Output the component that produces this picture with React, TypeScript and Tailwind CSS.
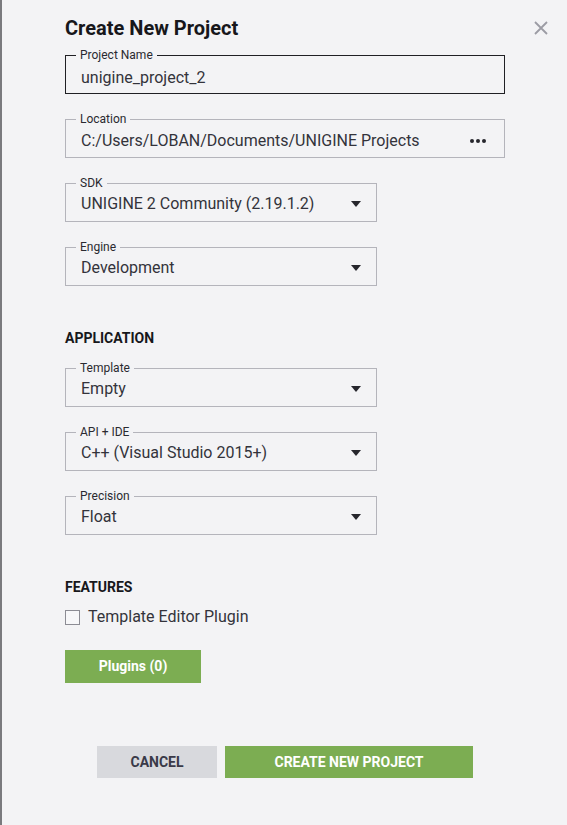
import React from "react";

function Caret() {
  return (
    <svg width="10" height="6" viewBox="0 0 10 6" className="shrink-0">
      <path d="M0 0h10L5 6z" fill="#26262c" />
    </svg>
  );
}

function Field({
  label,
  value,
  active,
  wide,
  right,
  pad = "pb-[4px]",
}: {
  label: string;
  value: string;
  active?: boolean;
  wide?: boolean;
  right?: React.ReactNode;
  pad?: string;
}) {
  return (
    <fieldset
      className={`${wide ? "w-[440px]" : "w-[312px]"} ${
        active ? "border-[1.5px] border-[#202024]" : "border border-[#b4b4bb]"
      } px-[15px] pb-0 pt-0 m-0 min-w-0`}
    >
      <legend className="ml-[-5px] px-[4px] text-[12px] leading-[14px] text-[#2a2a30]">{label}</legend>
      <div className={`flex h-[31px] items-center justify-between ${pad}`}>
        <span className="text-[16px] text-[#33333b]">{value}</span>
        {right}
      </div>
    </fieldset>
  );
}

export default function App() {
  return (
    <div
      className="min-h-[825px] w-[567px] bg-[#f3f3f5] border-l-2 border-[#7a7a7e] relative"
      style={{ fontFamily: "Roboto, 'Liberation Sans', sans-serif" }}
    >
      {/* Close */}
      <button className="absolute right-[19px] top-[21px] text-[#9c9ca4]">
        <svg width="14" height="14" viewBox="0 0 14 14">
          <path d="M1 1l12 12M13 1L1 13" stroke="currentColor" strokeWidth="1.8" />
        </svg>
      </button>

      <div className="pl-[63px] pt-[15px]">
        <h1 className="text-[20px] font-bold leading-[26px] text-[#17171b]">Create New Project</h1>

        <div className="mt-[7px] flex flex-col gap-[18px]">
          <Field label="Project Name" value="unigine_project_2" active wide pad="pb-[0px]" />
          <Field
            label="Location"
            value="C:/Users/LOBAN/Documents/UNIGINE Projects"
            wide
            pad="pb-[2px]"
            right={
              <span className="flex gap-[2px] pr-[3px]">
                <span className="h-[4px] w-[4px] rounded-full bg-[#26262c]" />
                <span className="h-[4px] w-[4px] rounded-full bg-[#26262c]" />
                <span className="h-[4px] w-[4px] rounded-full bg-[#26262c]" />
              </span>
            }
          />
          <Field label="SDK" value="UNIGINE 2 Community (2.19.1.2)" right={<Caret />} />
          <Field label="Engine" value="Development" right={<Caret />} />
        </div>

        <h2 className="mt-[43px] text-[14px] font-bold leading-[18px] text-[#17171b]">APPLICATION</h2>

        <div className="mt-[14px] flex flex-col gap-[18px]">
          <Field label="Template" value="Empty" right={<Caret />} />
          <Field label="API + IDE" value="C++ (Visual Studio 2015+)" right={<Caret />} />
          <Field label="Precision" value="Float" right={<Caret />} />
        </div>

        <h2 className="mt-[43px] text-[14px] font-bold leading-[18px] text-[#17171b]">FEATURES</h2>

        <label className="mt-[9px] flex items-center gap-[8px]">
          <span className="h-[15px] w-[15px] border border-[#8c8c94] bg-[#f7f7f9]" />
          <span className="text-[16px] text-[#33333b]">Template Editor Plugin</span>
        </label>

        <button className="mt-[21px] h-[33px] w-[136px] bg-[#7cad52] text-[14px] font-bold text-white">
          Plugins (0)
        </button>

        <div className="mt-[63px] ml-[32px] flex gap-[8px]">
          <button className="h-[32px] w-[120px] bg-[#d8d9dd] text-[14px] font-bold text-[#3a3a48]">
            CANCEL
          </button>
          <button className="h-[32px] w-[248px] bg-[#7cad52] text-[14px] font-bold text-white">
            CREATE NEW PROJECT
          </button>
        </div>
      </div>
    </div>
  );
}
